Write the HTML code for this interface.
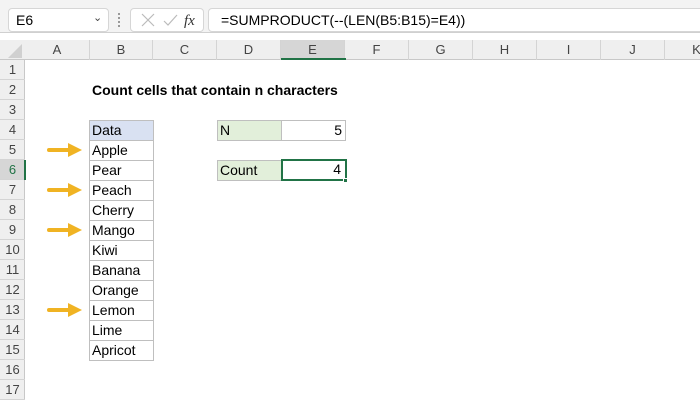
<!DOCTYPE html><html><head><style>
body{margin:0;width:700px;height:400px;overflow:hidden;background:#fff;font-family:"Liberation Sans",Arial,sans-serif;position:relative}
.a{position:absolute;box-sizing:border-box}
.t{font-size:14px;color:#000;line-height:20px}
</style></head><body>
<div class="a" style="left:0;top:0;width:700px;height:33px;background:#f3f3f3;border-bottom:1px solid #d0d0d0"></div>
<div class="a" style="left:8px;top:8px;width:101px;height:24px;background:#fff;border:1px solid #d6d6d6;border-radius:4px;font-size:14px;padding:3px 0 0 7px">E6<span style="position:absolute;left:84px;top:2px;font-size:11px;color:#444">&#8964;</span></div>
<div class="a" style="left:118px;top:13px;width:2px;height:14px;border-left:2px dotted #999"></div>
<div class="a" style="left:130px;top:8px;width:74px;height:24px;background:#fff;border:1px solid #d6d6d6;border-radius:4px"></div>
<svg class="a" style="left:130px;top:8px" width="74" height="24"><path d="M12 6l12 12M24 6L12 18" stroke="#bbb" stroke-width="1.2"/><path d="M34 13l4 4 9-10" stroke="#bbb" stroke-width="1.2" fill="none"/><text x="54" y="17" font-family="Liberation Serif" font-style="italic" font-size="15" fill="#333">fx</text></svg>
<div class="a" style="left:208px;top:8px;width:500px;height:24px;background:#fff;border:1px solid #d6d6d6;border-radius:4px;font-size:14px;padding:3px 0 0 12px">=SUMPRODUCT(--(LEN(B5:B15)=E4))</div>
<div class="a" style="left:0;top:40px;width:700px;height:20px;background:#efefef;border-bottom:1px solid #c8c8c8"></div>
<div class="a" style="left:0;top:60px;width:25px;height:340px;background:#efefef;border-right:1px solid #c8c8c8"></div>
<svg class="a" style="left:0;top:40px" width="25" height="20"><path d="M22 4V18H8z" fill="#d0d0d0"/></svg>
<div id="g"></div>
<div class="a t" style="left:92px;top:80px;font-weight:bold">Count cells that contain n characters</div>
<div class="a" style="left:89px;top:120px;width:65px;height:20px;background:#d9e1f2"></div>
<div class="a" style="left:217px;top:120px;width:65px;height:20px;background:#e2efda"></div>
<div class="a" style="left:217px;top:160px;width:65px;height:20px;background:#e2efda"></div>
<div id="c"></div>
<div class="a" style="left:281px;top:159px;width:66px;height:22px;border:2px solid #217346"></div>
<div class="a" style="left:343px;top:178px;width:5px;height:5px;background:#217346;border:1px solid #fff"></div>
<div class="a" style="left:281px;top:58px;width:65px;height:2px;background:#217346"></div>
<div class="a" style="left:24px;top:160px;width:2px;height:20px;background:#217346"></div>
<script>
let h='';const cols=[[25,90,'A'],[90,153,'B'],[153,217,'C'],[217,281,'D'],[281,345,'E'],[345,409,'F'],[409,473,'G'],[473,537,'H'],[537,601,'I'],[601,665,'J'],[665,729,'K']];
for(const[l,r,n]of cols){h+=`<div class="a" style="left:${l}px;top:40px;width:${r-l}px;height:20px;border-right:1px solid #d4d4d4;text-align:center;font-size:13px;line-height:20px;color:#444;${n=='E'?'background:#d6d6d6':''}">${n}</div>`}
for(let i=1;i<=17;i++){let y=60+(i-1)*20;h+=`<div class="a" style="left:0;top:${y}px;width:25px;height:20px;border-bottom:1px solid #d4d4d4;text-align:center;font-size:13px;line-height:20px;color:#444;${i==6?'background:#d6d6d6;color:#217346':''}">${i}</div>`}
document.getElementById('g').innerHTML=h;
let c='';const d=['Data','Apple','Pear','Peach','Cherry','Mango','Kiwi','Banana','Orange','Lemon','Lime','Apricot'];
d.forEach((w,i)=>{let y=120+i*20;c+=`<div class="a t" style="left:89px;top:${y}px;width:65px;height:21px;border:1px solid #bfbfbf;padding-left:2px;line-height:19px">${w}</div>`});
c+=`<div class="a t" style="left:217px;top:120px;width:65px;height:21px;border:1px solid #bfbfbf;padding-left:2px;line-height:19px">N</div><div class="a t" style="left:281px;top:120px;width:65px;height:21px;border:1px solid #bfbfbf;padding-right:3px;text-align:right;line-height:19px">5</div>`;
c+=`<div class="a t" style="left:217px;top:160px;width:65px;height:21px;border:1px solid #bfbfbf;padding-left:2px;line-height:19px">Count</div><div class="a t" style="left:281px;top:160px;width:65px;height:21px;padding-right:5px;text-align:right;line-height:19px">4</div>`;
[5,7,9,13].forEach(r=>{let y=60+(r-1)*20;c+=`<svg class="a" style="left:46px;top:${y}px" width="38" height="20"><path d="M3 10H24" stroke="#f0b323" stroke-width="4" stroke-linecap="round"/><path d="M22 3L36 10L22 17z" fill="#f0b323"/></svg>`});
document.getElementById('c').innerHTML=c;
</script>
</body></html>
